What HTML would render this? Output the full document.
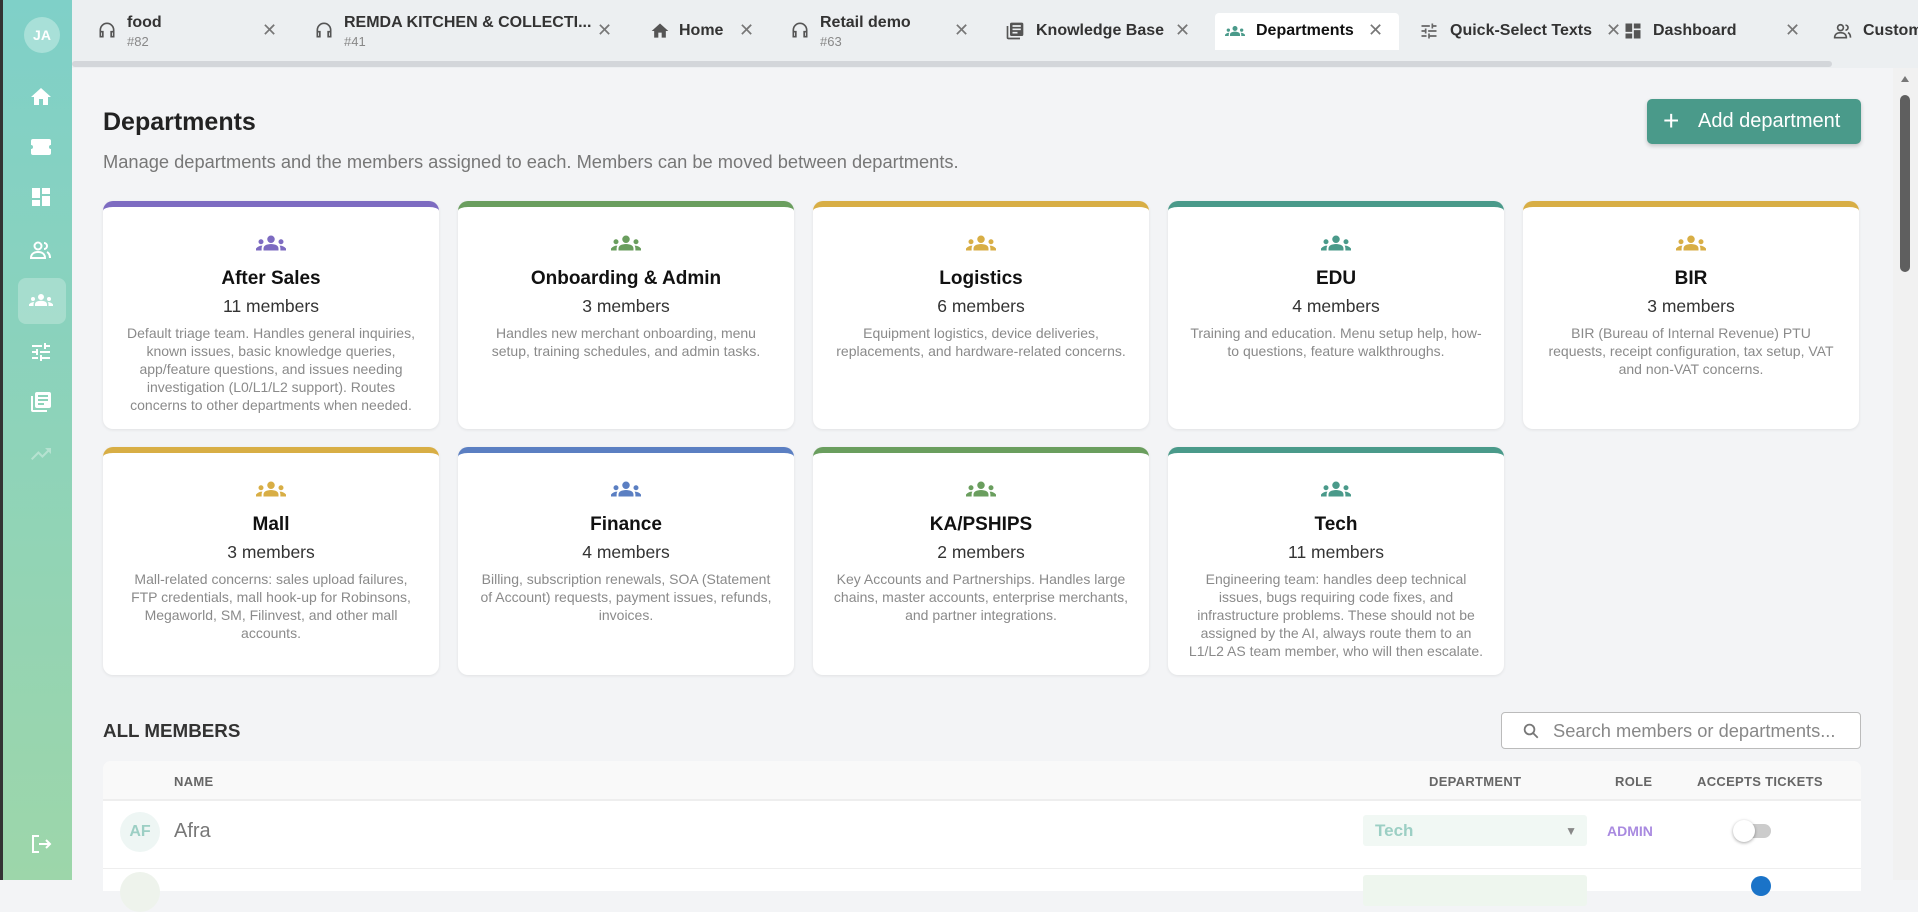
<!DOCTYPE html>
<html><head><meta charset="utf-8"><style>
*{box-sizing:border-box;margin:0;padding:0}
body{width:1918px;height:880px;overflow:hidden;background:#f3f4f6;font-family:"Liberation Sans",sans-serif;position:relative;color:#222}
.side{position:absolute;left:0;top:0;width:72px;height:880px;background:linear-gradient(#7fd0c8,#9dd6aa);border-left:3px solid #333}
.av{position:absolute;left:21px;top:17px;width:36px;height:36px;border-radius:50%;background:#a8e0d8;color:#fff;font-weight:bold;font-size:14px;text-align:center;line-height:36px}
.si{position:absolute;left:26px;width:24px;height:24px}
.act{position:absolute;left:15px;top:278px;width:48px;height:46px;border-radius:8px;background:rgba(255,255,255,.25)}
.tabs{position:absolute;left:72px;top:0;right:0;height:68px;background:#eceff1}
.tabs .bar{position:absolute;left:0;top:61px;width:1760px;height:6px;background:#d3d6da;border-radius:3px}
.tab{position:absolute;font-size:16px;font-weight:bold;color:#333;white-space:nowrap}
.tab small{display:block;font-size:13px;font-weight:normal;color:#888;margin-top:2px}
.x{position:absolute;font-size:18px;color:#777;font-weight:normal}
.ti{position:absolute;width:20px;height:20px}
.activetab{position:absolute;left:1143px;top:13px;width:184px;height:37px;background:#fff;border-radius:4px 4px 0 0}
h1{position:absolute;left:103px;top:108px;font-size:25px;font-weight:bold;color:#222}
.sub{position:absolute;left:103px;top:151px;font-size:18.3px;color:#777;white-space:nowrap}
.btn{position:absolute;left:1647px;top:99px;width:214px;height:45px;background:#4a9a8a;border-radius:5px;color:#fff;font-size:20px;line-height:45px;box-shadow:0 2px 4px rgba(0,0,0,.2)}
.btn b{font-weight:normal;font-size:28px;position:absolute;left:16px;top:-1px}
.btn span{position:absolute;left:51px}
.grid{position:absolute;left:103px;top:201px;display:grid;grid-template-columns:repeat(5,336px);column-gap:19px;row-gap:18px}
.card{height:228px;background:#fff;border-radius:10px;border-top:6px solid;box-shadow:0 1px 3px rgba(0,0,0,.08);text-align:center;padding:25px 18px 0;overflow:hidden}
.card svg{width:30px;height:22px}
.card h3{font-size:19px;margin-top:9px;color:#111}
.card .m{font-size:17.5px;color:#333;margin-top:6px}
.card p{font-size:14px;color:#8a8a8a;line-height:18px;margin-top:7px;display:-webkit-box;-webkit-line-clamp:5;-webkit-box-orient:vertical;overflow:hidden}
.allm{position:absolute;left:103px;top:720px;font-size:18.8px;font-weight:bold;color:#333}
.search{position:absolute;left:1501px;top:712px;width:360px;height:37px;border:1px solid #bbb;border-radius:4px;background:#fff;font-size:18.3px;color:#888;line-height:35px;padding-left:51px;white-space:nowrap}
.table{position:absolute;left:103px;top:761px;width:1758px;height:130px;background:#fff;border-radius:8px 8px 0 0}
.th{position:absolute;top:13px;font-size:13px;font-weight:bold;color:#666;letter-spacing:.3px}
.thead{position:absolute;left:0;top:0;width:100%;height:40px;background:#f9f9f9;border-bottom:2px solid #eee;border-radius:8px 8px 0 0}
.sb{position:absolute;right:0;top:68px;width:25px;height:812px;background:#f1f1f1}
.sb .th2{position:absolute;left:7px;top:27px;width:10px;height:177px;background:#5f5f5f;border-radius:5px}
</style></head><body>
<svg width="0" height="0" style="position:absolute"><defs><path id="g" d="M12 12.75c1.63 0 3.07.39 4.24.9 1.08.48 1.76 1.56 1.76 2.73V18H6v-1.61c0-1.18.68-2.26 1.76-2.73 1.17-.52 2.61-.91 4.24-.91zM4 13a2 2 0 1 0 0-4 2 2 0 0 0 0 4zm1.13 1.1A6.5 6.5 0 0 0 0 16.43V18h4.5v-1.61c0-.83.23-1.61.63-2.29zM20 13a2 2 0 1 0 0-4 2 2 0 0 0 0 4zm4 3.43a6.5 6.5 0 0 0-5.13-2.33c.4.68.63 1.46.63 2.29V18H24zM12 6a3 3 0 1 1 0 6 3 3 0 0 1 0-6z"/></defs></svg>
<div class="side">
<div class="av">JA</div>
<div class="act"></div>
<svg class="si" style="top:85px" viewBox="0 0 24 24" fill="#fff"><path d="M10 20v-6h4v6h5v-8h3L12 3 2 12h3v8z"/></svg>
<svg class="si" style="top:135px" viewBox="0 0 24 24" fill="#fff"><path d="M22 10V6a2 2 0 0 0-2-2H4a2 2 0 0 0-2 2v4a2 2 0 0 1 0 4v4a2 2 0 0 0 2 2h16a2 2 0 0 0 2-2v-4a2 2 0 0 1 0-4z"/></svg>
<svg class="si" style="top:185px" viewBox="0 0 24 24" fill="#fff"><path d="M3 13h8V3H3zm0 8h8v-6H3zm10 0h8V11h-8zm0-18v6h8V3z"/></svg>
<svg class="si" style="top:238px" viewBox="0 0 24 24" fill="none" stroke="#fff" stroke-width="2"><circle cx="9" cy="8" r="3.5"/><path d="M2 20c0-4 3-6 7-6s7 2 7 6zM15 5a3 3 0 0 1 0 6M18 14c2 1 3 3 3 6"/></svg>
<svg class="si" style="top:288px" viewBox="0 0 24 24" fill="#fff"><use href="#g"/></svg>
<svg class="si" style="top:340px" viewBox="0 0 24 24" fill="#fff"><path d="M3 17v2h6v-2zM3 5v2h10V5zm10 16v-2h8v-2h-8v-2h-2v6zM7 9v2H3v2h4v2h2V9zm14 4v-2H11v2zm-6-4h2V7h4V5h-4V3h-2z"/></svg>
<svg class="si" style="top:390px" viewBox="0 0 24 24" fill="#fff"><path d="M4 6H2v14a2 2 0 0 0 2 2h14v-2H4zm16-4H8a2 2 0 0 0-2 2v12a2 2 0 0 0 2 2h12a2 2 0 0 0 2-2V4a2 2 0 0 0-2-2zm-1 9h-10V9h10zm-4 4H9v-2h6zm4-8H9V5h10z"/></svg>
<svg class="si" style="top:442px;opacity:.35" viewBox="0 0 24 24" fill="#fff"><path d="M16 6l2.29 2.29-4.88 4.88-4-4L2 16.59 3.41 18l6-6 4 4 6.3-6.29L22 12V6z"/></svg>
<svg class="si" style="top:832px" viewBox="0 0 24 24" fill="none" stroke="#fff" stroke-width="2"><path d="M10 4H4v16h6M10 12h11M17 8l4 4-4 4"/></svg>
</div>
<div class="tabs">
<div class="bar"></div>
<div class="activetab"></div>
</div>
<div style="position:absolute;left:0;top:0">
<svg class="ti" style="left:97px;top:20px" viewBox="0 0 24 24" fill="none" stroke="#555" stroke-width="2"><path d="M4 17v-5a8 8 0 0 1 16 0v5M4 14h3v6H4zM17 14h3v6h-3z"/></svg>
<div class="tab" style="left:127px;top:14px">food<small>#82</small></div><div class="x" style="left:262px;top:20px">✕</div>
<svg class="ti" style="left:314px;top:20px" viewBox="0 0 24 24" fill="none" stroke="#555" stroke-width="2"><path d="M4 17v-5a8 8 0 0 1 16 0v5M4 14h3v6H4zM17 14h3v6h-3z"/></svg>
<div class="tab" style="left:344px;top:14px">REMDA KITCHEN &amp; COLLECTI...<small>#41</small></div><div class="x" style="left:597px;top:20px">✕</div>
<svg class="ti" style="left:650px;top:21px" viewBox="0 0 24 24" fill="#555"><path d="M10 20v-6h4v6h5v-8h3L12 3 2 12h3v8z"/></svg>
<div class="tab" style="left:679px;top:22px">Home</div><div class="x" style="left:739px;top:20px">✕</div>
<svg class="ti" style="left:790px;top:20px" viewBox="0 0 24 24" fill="none" stroke="#555" stroke-width="2"><path d="M4 17v-5a8 8 0 0 1 16 0v5M4 14h3v6H4zM17 14h3v6h-3z"/></svg>
<div class="tab" style="left:820px;top:14px">Retail demo<small>#63</small></div><div class="x" style="left:954px;top:20px">✕</div>
<svg class="ti" style="left:1005px;top:21px" viewBox="0 0 24 24" fill="#555"><path d="M4 6H2v14a2 2 0 0 0 2 2h14v-2H4zm16-4H8a2 2 0 0 0-2 2v12a2 2 0 0 0 2 2h12a2 2 0 0 0 2-2V4a2 2 0 0 0-2-2zm-1 9h-10V9h10zm-4 4H9v-2h6zm4-8H9V5h10z"/></svg>
<div class="tab" style="left:1036px;top:22px">Knowledge Base</div><div class="x" style="left:1175px;top:20px">✕</div>
<svg class="ti" style="left:1225px;top:21px" viewBox="0 0 24 24" fill="#4a9a8a"><use href="#g"/></svg>
<div class="tab" style="left:1256px;top:22px;color:#111">Departments</div><div class="x" style="left:1368px;top:20px">✕</div>
<svg class="ti" style="left:1419px;top:21px" viewBox="0 0 24 24" fill="#666"><path d="M3 17v2h6v-2zM3 5v2h10V5zm10 16v-2h8v-2h-8v-2h-2v6zM7 9v2H3v2h4v2h2V9zm14 4v-2H11v2zm-6-4h2V7h4V5h-4V3h-2z"/></svg>
<div class="tab" style="left:1450px;top:22px">Quick-Select Texts</div><div class="x" style="left:1606px;top:20px">✕</div>
<svg class="ti" style="left:1623px;top:21px" viewBox="0 0 24 24" fill="#555"><path d="M3 13h8V3H3zm0 8h8v-6H3zm10 0h8V11h-8zm0-18v6h8V3z"/></svg>
<div class="tab" style="left:1653px;top:22px">Dashboard</div><div class="x" style="left:1785px;top:20px">✕</div>
<svg class="ti" style="left:1833px;top:21px" viewBox="0 0 24 24" fill="none" stroke="#555" stroke-width="2"><circle cx="9" cy="8" r="3.5"/><path d="M2 20c0-4 3-6 7-6s7 2 7 6zM15 5a3 3 0 0 1 0 6M18 14c2 1 3 3 3 6"/></svg>
<div class="tab" style="left:1863px;top:22px">Customers</div>
</div>
<div class="sb"><div style="position:absolute;left:8px;top:8px;border:4px solid transparent;border-bottom:6px solid #777;border-top:0"></div><div class="th2"></div></div>

<h1>Departments</h1>
<div class="sub">Manage departments and the members assigned to each. Members can be moved between departments.</div>
<div class="btn"><b>+</b><span>Add department</span></div>

<div class="grid">
<div class="card" style="border-color:#7d6bc1"><svg viewBox="0 4 24 16" fill="#7d6bc1"><use href="#g"/></svg><h3>After Sales</h3><div class="m">11 members</div><p>Default triage team. Handles general inquiries, known issues, basic knowledge queries, app/feature questions, and issues needing investigation (L0/L1/L2 support). Routes concerns to other departments when needed.</p></div>
<div class="card" style="border-color:#6a9e5e"><svg viewBox="0 4 24 16" fill="#6a9e5e"><use href="#g"/></svg><h3>Onboarding &amp; Admin</h3><div class="m">3 members</div><p>Handles new merchant onboarding, menu setup, training schedules, and admin tasks.</p></div>
<div class="card" style="border-color:#d8ae45"><svg viewBox="0 4 24 16" fill="#d8ae45"><use href="#g"/></svg><h3>Logistics</h3><div class="m">6 members</div><p>Equipment logistics, device deliveries, replacements, and hardware-related concerns.</p></div>
<div class="card" style="border-color:#4a9a8a"><svg viewBox="0 4 24 16" fill="#4a9a8a"><use href="#g"/></svg><h3>EDU</h3><div class="m">4 members</div><p>Training and education. Menu setup help, how-to questions, feature walkthroughs.</p></div>
<div class="card" style="border-color:#d8ae45"><svg viewBox="0 4 24 16" fill="#d8ae45"><use href="#g"/></svg><h3>BIR</h3><div class="m">3 members</div><p>BIR (Bureau of Internal Revenue) PTU requests, receipt configuration, tax setup, VAT and non-VAT concerns.</p></div>
<div class="card" style="border-color:#d8ae45"><svg viewBox="0 4 24 16" fill="#d8ae45"><use href="#g"/></svg><h3>Mall</h3><div class="m">3 members</div><p>Mall-related concerns: sales upload failures, FTP credentials, mall hook-up for Robinsons, Megaworld, SM, Filinvest, and other mall accounts.</p></div>
<div class="card" style="border-color:#5b7fc2"><svg viewBox="0 4 24 16" fill="#5b7fc2"><use href="#g"/></svg><h3>Finance</h3><div class="m">4 members</div><p>Billing, subscription renewals, SOA (Statement of Account) requests, payment issues, refunds, invoices.</p></div>
<div class="card" style="border-color:#6a9e5e"><svg viewBox="0 4 24 16" fill="#6a9e5e"><use href="#g"/></svg><h3>KA/PSHIPS</h3><div class="m">2 members</div><p>Key Accounts and Partnerships. Handles large chains, master accounts, enterprise merchants, and partner integrations.</p></div>
<div class="card" style="border-color:#4a9a8a"><svg viewBox="0 4 24 16" fill="#4a9a8a"><use href="#g"/></svg><h3>Tech</h3><div class="m">11 members</div><p>Engineering team: handles deep technical issues, bugs requiring code fixes, and infrastructure problems. These should not be assigned by the AI, always route them to an L1/L2 AS team member, who will then escalate.</p></div>
</div>

<div class="allm">ALL MEMBERS</div>
<div class="search"><svg style="position:absolute;left:20px;top:9px" width="18" height="18" viewBox="0 0 24 24" fill="none" stroke="#777" stroke-width="2.4"><circle cx="10" cy="10" r="6.5"/><path d="M15 15l6 6"/></svg>Search members or departments...</div>
<div class="table">
<div class="thead"></div>
<div class="th" style="left:71px">NAME</div>
<div class="th" style="left:1326px">DEPARTMENT</div>
<div class="th" style="left:1512px">ROLE</div>
<div class="th" style="left:1594px">ACCEPTS TICKETS</div>
<div style="position:absolute;left:17px;top:51px;width:40px;height:40px;border-radius:50%;background:#eef6f4;color:#9ccfc4;font-size:16px;font-weight:bold;text-align:center;line-height:40px">AF</div>
<div style="position:absolute;left:71px;top:59px;font-size:20px;color:#777">Afra</div>
<div style="position:absolute;left:1260px;top:54px;width:224px;height:31px;background:#f1f8f4;border-radius:3px;color:#9ccfc4;font-size:17px;font-weight:bold;line-height:31px;padding-left:12px">Tech<span style="position:absolute;right:10px;top:1px;color:#888;font-size:12px">▼</span></div>
<div style="position:absolute;left:1504px;top:62px;font-size:14px;font-weight:bold;color:#a98ae0">ADMIN</div>
<div style="position:absolute;left:1634px;top:63px;width:34px;height:14px;border-radius:7px;background:#ccc"></div>
<div style="position:absolute;left:1630px;top:59px;width:22px;height:22px;border-radius:50%;background:#fff;box-shadow:0 1px 3px rgba(0,0,0,.35)"></div>
<div style="position:absolute;left:0;top:107px;width:100%;height:1px;background:#eee"></div>
<div style="position:absolute;left:17px;top:111px;width:40px;height:40px;border-radius:50%;background:#eef3ec"></div>
<div style="position:absolute;left:1260px;top:114px;width:224px;height:31px;background:#eef6ee;border-radius:3px"></div>
<div style="position:absolute;left:1648px;top:115px;width:20px;height:20px;border-radius:50%;background:#1a73c8"></div>
</div>
</body></html>
